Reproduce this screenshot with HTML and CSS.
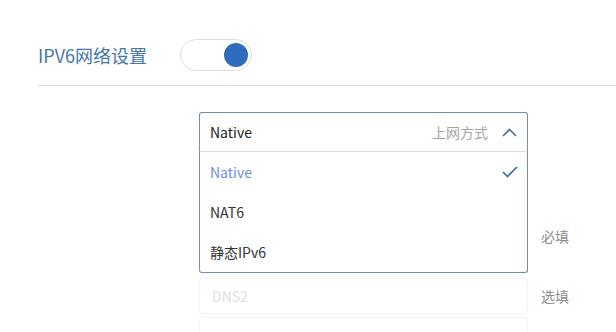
FILE: index.html
```html
<!DOCTYPE html>
<html lang="zh-CN">
<head>
    <meta charset="UTF-8">
    <title>IPV6网络设置</title>
    <link rel="stylesheet" href="styles.css">
</head>
<body>

    <!-- Section header -->
    <div class="section-head">
        <h2 class="section-title">IPV6网络设置</h2>
        <span class="switch on"><span class="knob"></span></span>
    </div>

    <!-- Form -->
    <div class="form">
        <div class="field">
            <div class="select open">
                <div class="select-head">
                    <span class="select-value">Native</span>
                    <span class="select-hint">上网方式</span>
                    <svg class="chevron" width="15" height="9" viewBox="0 0 15 9">
                        <polyline points="1,8 7.5,1.5 14,8" fill="none" stroke="#4b6f96" stroke-width="1.6"/>
                    </svg>
                </div>
                <ul class="options">
                    <li class="option selected">
                        Native
                        <svg class="check" width="16" height="12" viewBox="0 0 16 12">
                            <polyline points="1,6 5.5,10.5 15,1" fill="none" stroke="#3f6a99" stroke-width="1.7"/>
                        </svg>
                    </li>
                    <li class="option">NAT6</li>
                    <li class="option">静态IPv6</li>
                </ul>
            </div>
        </div>

        <!-- rows hidden under the open dropdown -->
        <div class="field">
            <div class="input"></div>
        </div>

        <div class="field">
            <div class="input"></div>
            <span class="note">必填</span>
        </div>

        <div class="field">
            <div class="input"><span class="placeholder">DNS2</span></div>
            <span class="note">选填</span>
        </div>

        <div class="field last">
            <div class="input"></div>
        </div>
    </div>

</body>
</html>
```

FILE: styles.css
```css
html, body {
    height: 332px;
}

body {
    margin: 0;
    background-color: #fff;
    font-family: "Noto Sans CJK SC", "Noto Sans", sans-serif;
    color: #333;
    overflow: hidden;
}

.section-head {
    display: flex;
    align-items: center;
    margin-left: 38px;
    padding-top: 39px;
    padding-bottom: 14px;
    border-bottom: 1px solid #dadada;
}

.section-title {
    margin: 0;
    width: 142px;
    font-size: 18px;
    font-weight: normal;
    color: #4676aa;
    line-height: 32px;
}

.switch {
    display: flex;
    justify-content: flex-end;
    align-items: center;
    box-sizing: border-box;
    width: 72px;
    height: 32px;
    padding-right: 3px;
    border: 1px solid #e2ddd6;
    border-radius: 16px;
    background: #fff;
}

.knob {
    width: 24px;
    height: 24px;
    border-radius: 50%;
    background-color: #2f6dbc;
}

.form {
    margin-left: 199px;
    padding-top: 26px;
}

.field {
    display: flex;
    align-items: center;
    height: 36px;
    margin-bottom: 24px;
}

.field:first-child {
    height: 40px;
    margin-bottom: 6px;
}

.field.last {
    height: 14px;
    align-items: flex-start;
    margin-top: -21px;
    margin-bottom: 0;
    overflow: hidden;
}

.input {
    box-sizing: border-box;
    width: 329px;
    height: 36px;
    padding: 0 12px;
    border: 1px solid #f3f3f3;
    border-radius: 3px;
    display: flex;
    align-items: center;
    flex-shrink: 0;
}

.placeholder {
    font-size: 14px;
    color: #dedede;
}

.note {
    margin-left: 13px;
    font-size: 14px;
    color: #8c8c8c;
}

.select {
    position: relative;
    width: 329px;
    height: 40px;
}

.select.open {
    z-index: 10;
}

.select-head {
    box-sizing: border-box;
    display: flex;
    align-items: center;
    width: 329px;
    height: 40px;
    padding: 0 10px;
    border: 1px solid #6f8fb1;
    border-bottom-color: #d6dde6;
    border-radius: 3px 3px 0 0;
    background: #fff;
}

.select-value {
    flex: 1;
    font-size: 14px;
    color: #222;
}

.select-hint {
    font-size: 14px;
    color: #a5a5a5;
    margin-right: 14px;
}

.chevron {
    display: block;
}

.options {
    position: absolute;
    top: 40px;
    left: 0;
    box-sizing: border-box;
    width: 329px;
    margin: 0;
    padding: 0;
    list-style: none;
    background: #fff;
    border: 1px solid #6f8fb1;
    border-top: none;
    border-radius: 0 0 3px 3px;
}

.option {
    display: flex;
    align-items: center;
    justify-content: space-between;
    height: 40px;
    padding: 0 9px 0 10px;
    font-size: 14px;
    color: #333;
}

.option.selected {
    color: #6d8fd5;
}

.check {
    display: block;
}
```
